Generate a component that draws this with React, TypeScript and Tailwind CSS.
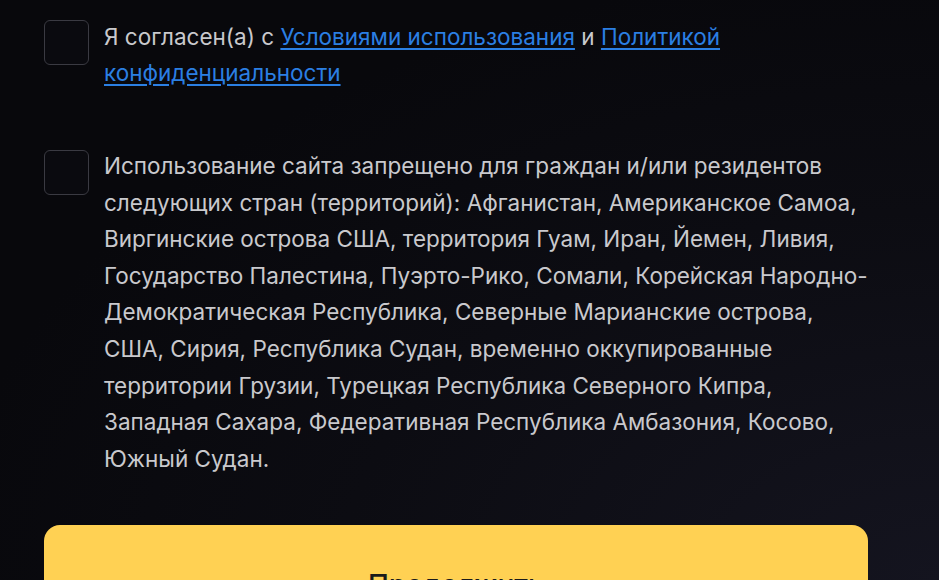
export default function App() {
  return (
    <div
      className="min-h-[580px] w-full overflow-hidden bg-[#08080c] bg-[radial-gradient(ellipse_at_100%_90%,#14141f_0%,#0c0c12_45%,#08080c_75%)] px-[44px] pt-[20px]"
      style={{ fontFamily: "Inter, 'Noto Sans', sans-serif" }}
    >
      <div className="w-[824px]">
        <label className="flex items-start gap-[15px]">
          <span className="h-[45px] w-[45px] shrink-0 rounded-[6px] border border-[#3a3a42] bg-[#0a0a0f]" />
          <span className="-mt-[1px] text-[22.5px] leading-[36px] text-[#c9c9cd]">
            Я согласен(а) с{" "}
            <a href="#" className="text-[#2b7fe3] underline underline-offset-[3px]">
              Условиями использования
            </a>{" "}
            и{" "}
            <a href="#" className="text-[#2b7fe3] underline underline-offset-[3px]">
              Политикой конфиденциальности
            </a>
          </span>
        </label>

        <label className="mt-[59px] flex items-start gap-[15px]">
          <span className="h-[45px] w-[45px] shrink-0 rounded-[6px] border border-[#3a3a42] bg-[#0a0a0f]" />
          <span className="-mt-[2px] text-[22.5px] leading-[36.6px] text-[#c9c9cd]">
            Использование сайта запрещено для граждан и/или резидентов следующих стран
            (территорий): Афганистан, Американское Самоа, Виргинские острова США, территория
            Гуам, Иран, Йемен, Ливия, Государство Палестина, Пуэрто-Рико, Сомали, Корейская
            Народно-Демократическая Республика, Северные Марианские острова, США, Сирия,
            Республика Судан, временно оккупированные территории Грузии, Турецкая Республика
            Северного Кипра, Западная Сахара, Федеративная Республика Амбазония, Косово, Южный
            Судан.
          </span>
        </label>

        <button className="mt-[48px] flex h-[120px] w-full items-center justify-center rounded-[16px] bg-[#ffd153] text-[28px] font-medium text-[#1a1a1a]">
          Продолжить
        </button>
      </div>
    </div>
  );
}
